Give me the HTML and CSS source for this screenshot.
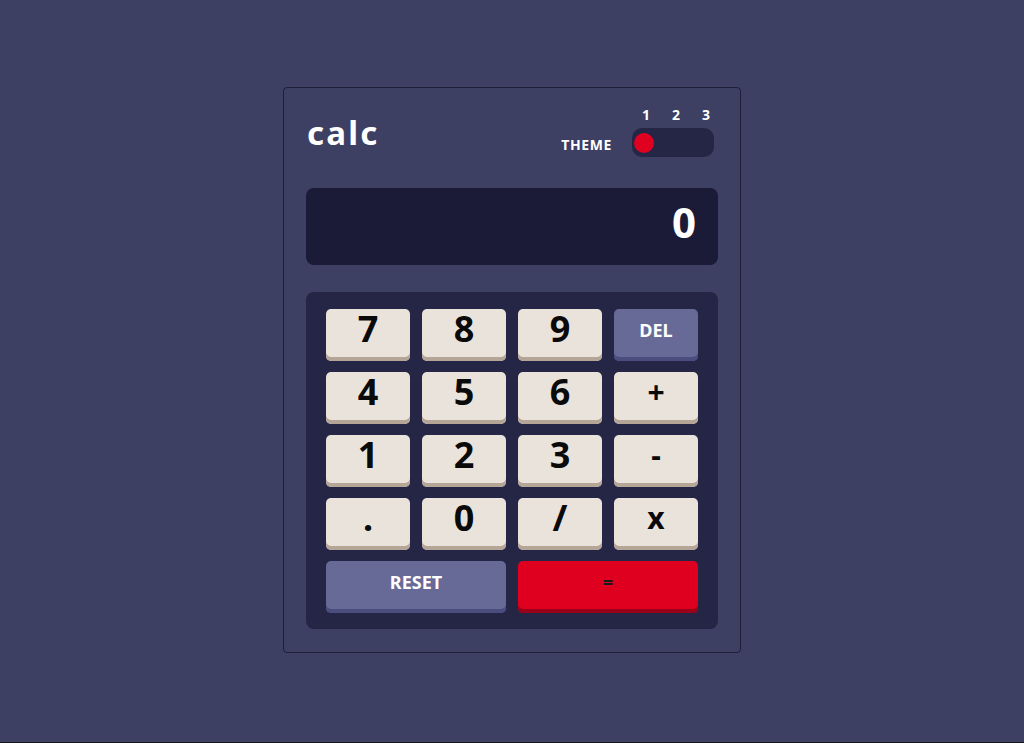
FILE: index.html
```html
<!DOCTYPE html>
<html lang="en">
<head>
<meta charset="utf-8">
<title>calc</title>
<link rel="stylesheet" href="styles.css">
</head>
<body>
<main class="calc">
  <header class="calc-header">
    <h1 class="logo">calc</h1>
    <div class="theme">
      <span class="theme-label">THEME</span>
      <div class="theme-switch">
        <div class="theme-nums"><span>1</span><span>2</span><span>3</span></div>
        <div class="toggle"><span class="knob"></span></div>
      </div>
    </div>
  </header>
  <section class="screen"><span class="screen-value">0</span></section>
  <section class="keypad">
    <button class="key">7</button>
    <button class="key">8</button>
    <button class="key">9</button>
    <button class="key key-alt">DEL</button>
    <button class="key">4</button>
    <button class="key">5</button>
    <button class="key">6</button>
    <button class="key key-op">+</button>
    <button class="key">1</button>
    <button class="key">2</button>
    <button class="key">3</button>
    <button class="key key-op">-</button>
    <button class="key key-dot">.</button>
    <button class="key">0</button>
    <button class="key">/</button>
    <button class="key key-op">x</button>
    <button class="key key-alt key-wide">RESET</button>
    <button class="key key-equal key-wide">=</button>
  </section>
</main>
</body>
</html>
```
FILE: styles.css
```css
html {
  background: #161616;
}
body {
  margin: 0;
  box-sizing: border-box;
  min-height: 742px;
  padding-bottom: 2px;
  background: #3d3f63;
  display: flex;
  align-items: center;
  justify-content: center;
  font-family: "Noto Sans", "Open Sans", sans-serif;
  font-weight: 700;
}
.calc {
  box-sizing: border-box;
  width: 458px;
  height: 566px;
  border: 1px solid #1e1e38;
  border-radius: 4px;
  padding: 20px 22px 22px;
  display: flex;
  flex-direction: column;
}
.calc-header {
  display: flex;
  justify-content: space-between;
  align-items: flex-end;
  height: 49px;
  padding-left: 1px;
  padding-right: 4px;
}
.logo {
  margin: 0 0 4px;
  font-size: 33px;
  line-height: 40px;
  color: #ffffff;
  letter-spacing: 2.2px;
}
.theme {
  display: flex;
  align-items: flex-end;
  gap: 20px;
}
.theme-label {
  color: #ffffff;
  font-size: 14px;
  letter-spacing: 0.6px;
  line-height: 16px;
  margin-bottom: 4px;
}
.theme-switch {
  display: flex;
  flex-direction: column;
  gap: 6px;
}
.theme-nums {
  display: flex;
  justify-content: space-between;
  padding: 0 4px 0 10px;
  color: #ffffff;
  font-size: 14px;
  line-height: 14px;
}
.toggle {
  box-sizing: border-box;
  width: 82px;
  height: 29px;
  border-radius: 10px;
  background: #252545;
  padding: 5px 2px;
  display: flex;
  align-items: center;
}
.knob {
  width: 20px;
  height: 20px;
  border-radius: 50%;
  background: #e0001f;
}
.screen {
  margin-top: 31px;
  height: 77px;
  border-radius: 8px;
  background: #1b1b37;
  display: flex;
  align-items: center;
  justify-content: flex-end;
  padding: 0 22px;
}
.screen-value {
  color: #ffffff;
  font-size: 42px;
  line-height: 1;
  margin-top: -10px;
}
.keypad {
  margin-top: 27px;
  height: 337px;
  box-sizing: border-box;
  border-radius: 8px;
  background: #252545;
  padding: 17px 20px 16px;
  display: grid;
  grid-template-columns: repeat(4, 1fr);
  grid-auto-rows: 52px;
  column-gap: 12px;
  row-gap: 11px;
}
.key {
  border: 0;
  border-radius: 5px;
  background: #eae3dc;
  box-shadow: inset 0 -4px 0 #b4a597;
  color: #0a0a0a;
  font-family: inherit;
  font-weight: 700;
  font-size: 36px;
  line-height: 1;
  padding: 0 0 12px;
  display: flex;
  align-items: center;
  justify-content: center;
}
.key-op {
  font-size: 30px;
}
.key-alt {
  background: #676a97;
  box-shadow: inset 0 -4px 0 #4b4d7e;
  color: #ffffff;
  font-size: 18px;
  padding-bottom: 10px;
}
.key-equal {
  background: #df001f;
  box-shadow: inset 0 -4px 0 #99001a;
  color: #1b1b1b;
  font-size: 18px;
  padding-bottom: 10px;
}
.key-wide {
  grid-column: span 2;
}
```
